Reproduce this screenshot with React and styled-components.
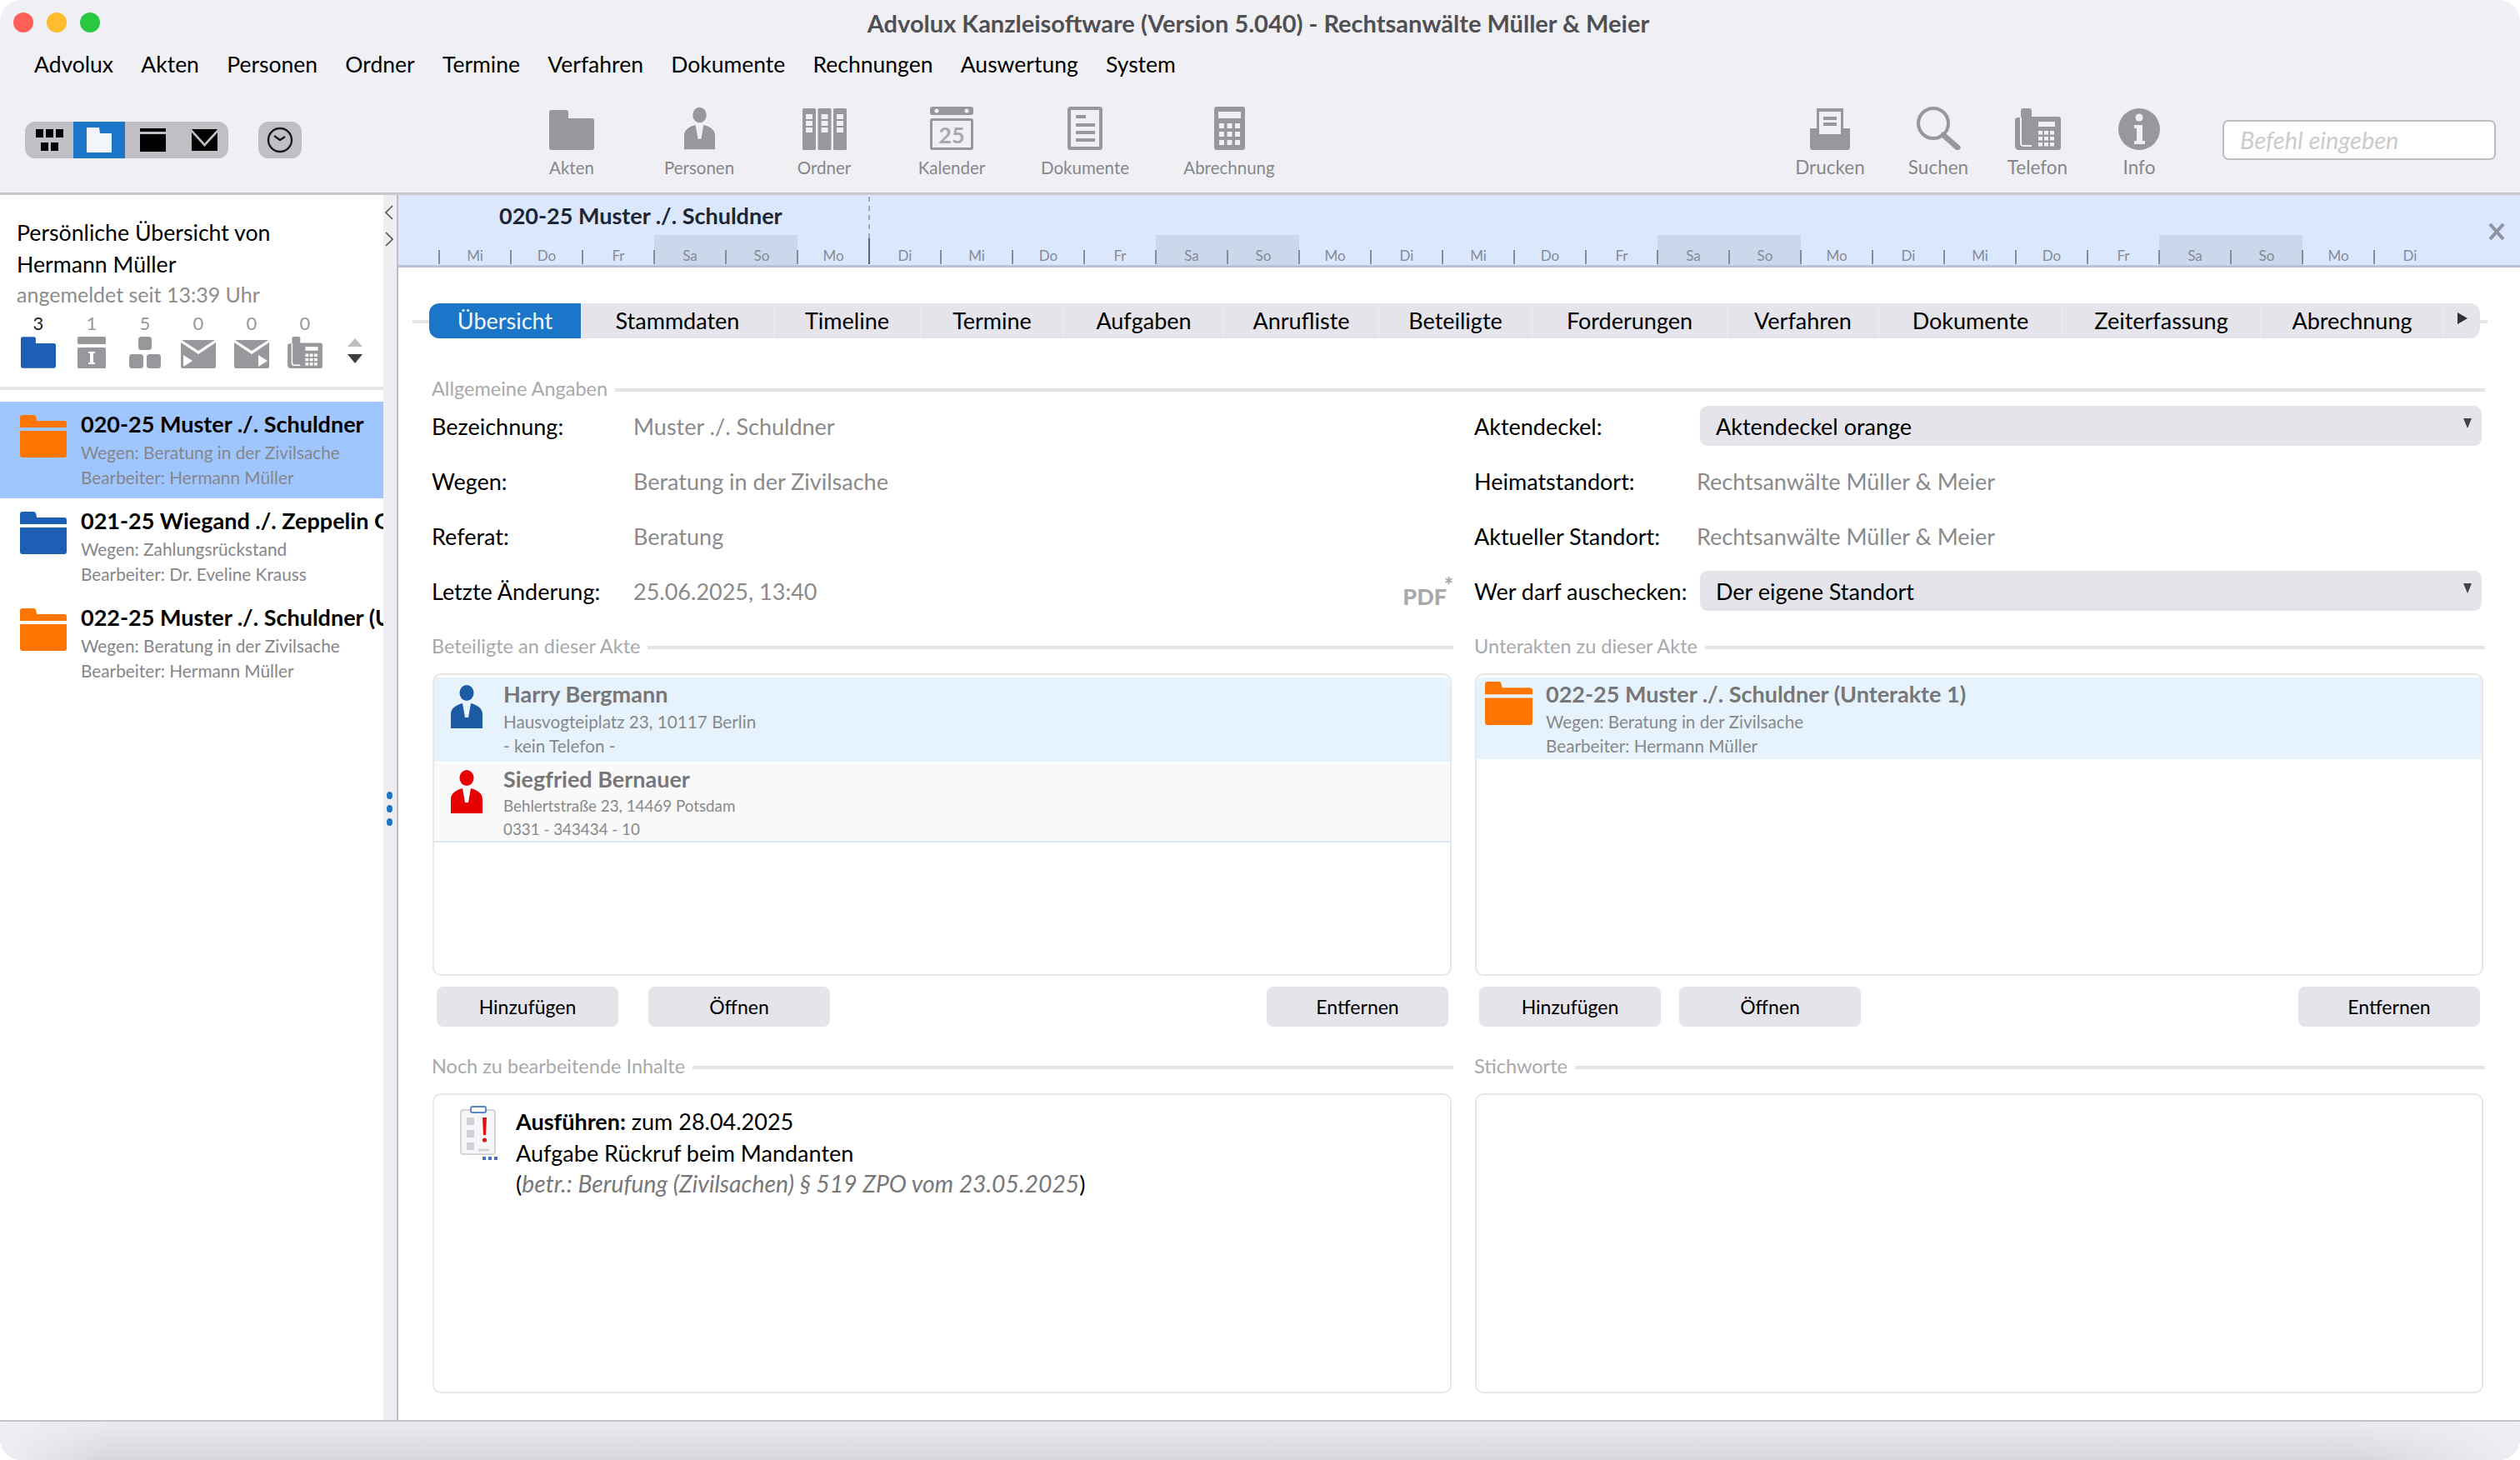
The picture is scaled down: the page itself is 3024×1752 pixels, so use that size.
import React from "react";
import styled, { createGlobalStyle } from "styled-components";

const GlobalStyle = createGlobalStyle`
  html, body { margin: 0; padding: 0; background: #fff; }
  body { font-family: "Lato", "Liberation Sans", sans-serif; color: #000; }
  * { box-sizing: border-box; }
`;

const GREY = "#98989c";

const Window = styled.div`
  width: 3024px;
  height: 1752px;
  display: flex;
  flex-direction: column;
  overflow: hidden;
  border-radius: 26px;
  background: #f0f0f4;
`;

const Header = styled.header`
  height: 234px;
  flex: none;
  border-bottom: 3px solid #c9c9cd;
`;

const TitleBar = styled.div`
  height: 54px;
  display: flex;
  align-items: center;
  padding: 0 124px 0 16px;
`;

const Lights = styled.div`
  display: flex;
  gap: 16px;
`;

const Light = styled.span`
  width: 24px;
  height: 24px;
  border-radius: 50%;
  background: ${({ $c }) => $c};
`;

const Title = styled.div`
  flex: 1;
  text-align: center;
  font-size: 29px;
  font-weight: 700;
  color: #505054;
`;

const MenuBar = styled.nav`
  height: 46px;
  display: flex;
  align-items: center;
  gap: 33.3px;
  padding-left: 41px;
  font-size: 26.5px;
`;

const Toolbar = styled.div`
  display: flex;
  align-items: flex-start;
  padding: 28px 29px 0 30px;
`;

const Segments = styled.div`
  display: flex;
  height: 44px;
  width: 244px;
  margin-top: 18px;
  border-radius: 12px;
  overflow: hidden;
  background: #c0bfc6;
`;

const Segment = styled.div`
  width: ${({ $w }) => $w}px;
  display: flex;
  align-items: center;
  justify-content: center;
  background: ${({ $on }) => ($on ? "#1b76c9" : "transparent")};
`;

const ClockButton = styled.div`
  width: 52px;
  height: 44px;
  margin: 18px 249px 0 36px;
  border-radius: 12px;
  background: #c0bfc6;
  display: flex;
  align-items: center;
  justify-content: center;
`;

const ToolGroup = styled.div`
  display: flex;
  margin-left: ${({ $auto }) => ($auto ? "auto" : "0")};
`;

const ToolItem = styled.div`
  width: ${({ $w }) => $w}px;
  display: flex;
  flex-direction: column;
  align-items: center;
`;

const ToolIcon = styled.div`
  height: 52px;
  display: flex;
  align-items: flex-end;
`;

const ToolLabel = styled.div`
  margin-top: 7px;
  font-size: ${({ $big }) => ($big ? 22.5 : 20.5)}px;
  line-height: 28px;
  color: #87878b;
`;

const CommandInput = styled.input`
  width: 328px;
  height: 48px;
  margin: 16px 0 0 32px;
  padding: 0 19px 2px;
  border: 2px solid #bdbdbd;
  border-radius: 7px;
  background: #fff;
  font-family: inherit;
  font-size: 29px;
  font-style: italic;
  &::placeholder { color: #cbcbcd; opacity: 1; }
`;

const Body = styled.div`
  flex: 1;
  display: flex;
  min-height: 0;
  background: #fff;
`;

const Sidebar = styled.aside`
  width: 460px;
  flex: none;
  overflow: hidden;
`;

const SideHead = styled.div`
  padding: 26px 0 0 20px;
`;

const SideTitle = styled.div`
  font-size: 26.7px;
  line-height: 38px;
`;

const SideSub = styled.div`
  font-size: 25px;
  line-height: 34px;
  color: #8c8c8c;
`;

const Counters = styled.div`
  display: flex;
  margin: 6px 0 0 -6px;
`;

const Counter = styled.div`
  width: 64px;
  display: flex;
  flex-direction: column;
  align-items: center;
`;

const CounterNum = styled.div`
  font-size: 22px;
  line-height: 24px;
  color: ${({ $on }) => ($on ? "#222" : "#999")};
`;

const CounterIcon = styled.div`
  height: 40px;
  margin-top: 2px;
  display: flex;
  align-items: flex-end;
`;

const SortArrows = styled.div`
  margin: 30px 0 0 18px;
`;

const SideDivider = styled.div`
  height: 4px;
  margin: 22px 0 14px;
  background: #e6e6e6;
`;

const FileRow = styled.div`
  height: 116px;
  padding: 12px 0 0 24px;
  display: flex;
  gap: 17px;
  white-space: nowrap;
  overflow: hidden;
  background: ${({ $on }) => ($on ? "#9fc6ff" : "transparent")};
  svg { margin-top: 4px; flex: none; }
`;

const FileName = styled.div`
  font-size: 27px;
  font-weight: 700;
  line-height: 30px;
`;

const FileSub = styled.div`
  font-size: 20.8px;
  line-height: 30px;
  color: #86868a;
  margin-top: ${({ $first }) => ($first ? "4px" : "0")};
`;

const Gutter = styled.div`
  width: 18px;
  flex: none;
  background: #eeeef2;
  border-right: 2px solid #bfbfc2;
  display: flex;
  flex-direction: column;
  align-items: center;
  padding: 12px 2px 0 0;
`;

const Chevrons = styled.div`
  display: flex;
  flex-direction: column;
  gap: 14px;
  margin-bottom: 654px;
`;

const Dots = styled.div`
  display: flex;
  flex-direction: column;
  gap: 7px;
  span {
    width: 7px;
    height: 9px;
    border-radius: 50%;
    background: #1b76c9;
  }
`;

const Main = styled.main`
  flex: 1;
  min-width: 0;
`;

const Timeline = styled.div`
  position: relative;
  height: 87px;
  background: #dbe7fd;
  border-bottom: 3px solid #b7c3d8;
`;

const TimelineTitle = styled.div`
  height: 48px;
  padding-left: 121px;
  display: flex;
  align-items: center;
  font-size: 27px;
  font-weight: 700;
  color: #1c2635;
`;

const DayStrip = styled.div`
  display: flex;
  padding-left: 49px;
`;

const Day = styled.div`
  position: relative;
  width: 86px;
  height: 36px;
  padding-top: 14px;
  text-align: center;
  font-size: 17px;
  line-height: 22px;
  color: #858b97;
  background: ${({ $weekend }) => ($weekend ? "#cbd7ea" : "transparent")};
  &::before {
    content: "";
    position: absolute;
    left: -1px;
    bottom: 1px;
    width: 2px;
    height: ${({ $today }) => ($today ? "31px" : "17px")};
    background: ${({ $today }) => ($today ? "#62666e" : "#868c98")};
  }
  ${({ $today }) =>
    $today &&
    `&::after {
      content: "";
      position: absolute;
      left: -1px;
      top: -46px;
      height: 50px;
      border-left: 2px dashed #a2a8b4;
    }`}
`;

const CloseBtn = styled.div`
  position: absolute;
  right: 18px;
  top: 34px;
  line-height: 0;
`;

const TabRow = styled.div`
  position: relative;
  display: flex;
  margin: 43px 0 0 37px;
  width: 2461px;
  height: 42px;
  &::before {
    content: "";
    position: absolute;
    left: -20px;
    right: -9px;
    top: 20px;
    height: 4px;
    background: #e6e6e6;
  }
`;

const Tab = styled.div`
  position: relative;
  width: ${({ $w }) => $w}px;
  display: flex;
  align-items: center;
  justify-content: center;
  padding-bottom: 2px;
  font-size: 27px;
  border-right: 1px solid #ededf1;
  color: ${({ $on }) => ($on ? "#f4f8fd" : "#000")};
  background: ${({ $on }) => ($on ? "#1b76c9" : "#e4e4ea")};
  &:first-child { border-radius: 12px 0 0 12px; }
  &:last-child { border-radius: 0 12px 12px 0; border-right: 0; }
`;

const TabArrow = styled.span`
  width: 0;
  height: 0;
  border-style: solid;
  border-width: 7px 0 7px 12px;
  border-color: transparent transparent transparent #333;
  margin-top: -4px;
`;

const Content = styled.div`
  display: grid;
  grid-template-columns: 1226px 1213px;
  column-gap: 25px;
  padding: 50px 0 0 40px;
`;

const Heading = styled.div`
  grid-column: ${({ $wide }) => ($wide ? "1 / span 2" : "auto")};
  height: 24px;
  display: flex;
  align-items: center;
  gap: 9px;
  padding-bottom: 4px;
  margin-top: ${({ $mt }) => $mt || 0}px;
  font-size: 23.5px;
  white-space: nowrap;
  color: #a9a9ab;
  &::after {
    content: "";
    flex: 1;
    height: 4px;
    margin-top: 4px;
    background: #e4e4e4;
  }
`;

const FormCol = styled.div`
  display: flex;
  flex-direction: column;
  margin-top: -2px;
`;

const FormRow = styled.div`
  height: 66px;
  display: flex;
  align-items: center;
  font-size: 27px;
  white-space: nowrap;
`;

const FormLabel = styled.div`
  width: ${({ $w }) => $w}px;
  flex: none;
`;

const FormValue = styled.div`
  color: #8a8a8c;
`;

const Select = styled.div`
  flex: 1;
  height: 48px;
  margin: 0 4px;
  padding: 0 12px 0 19px;
  display: flex;
  align-items: center;
  justify-content: space-between;
  border-radius: 9px;
  background: #e4e4ea;
`;

const Caret = styled.span`
  width: 0;
  height: 0;
  margin-top: -6px;
  border-style: solid;
  border-width: 12px 5px 0 5px;
  border-color: #444 transparent transparent transparent;
`;

const PdfMark = styled.div`
  position: relative;
  margin: 14px 8px 0 auto;
  font-size: 27px;
  font-weight: 900;
  line-height: 24px;
  color: #a9a9ab;
  &::after {
    content: "*";
    position: absolute;
    right: -8px;
    top: -15px;
    font-size: 26px;
    line-height: 26px;
  }
`;

const Panel = styled.div`
  height: ${({ $h }) => $h}px;
  margin: ${({ $mt }) => $mt || 0}px 2px 0 1px;
  padding-top: ${({ $pad }) => $pad || 0}px;
  border: 2px solid #e7e7eb;
  border-radius: 10px;
  overflow: hidden;
  background: #fff;
`;

const ListRow = styled.div`
  height: ${({ $h }) => $h}px;
  display: flex;
  white-space: nowrap;
  padding: ${({ $top }) => $top}px 0 0 ${({ $left }) => $left}px;
  gap: ${({ $gap }) => $gap}px;
  background: ${({ $on }) => ($on ? "#e6f3fc" : "#f9f9f9")};
  border-bottom: 2px solid ${({ $on }) => ($on ? "#fff" : "#dce9f5")};
  svg { flex: none; margin-top: ${({ $iconTop }) => $iconTop || 0}px; }
`;

const ListName = styled.div`
  font-size: 27px;
  font-weight: 700;
  line-height: 30px;
  color: #77777a;
`;

const ListSub = styled.div`
  font-size: ${({ $small }) => ($small ? 18.8 : 20.7)}px;
  line-height: ${({ $small }) => ($small ? 28 : 29)}px;
  color: #88888a;
  margin-top: ${({ $first, $small }) => ($first ? ($small ? "3px" : "4px") : "0")};
`;

const ButtonRow = styled.div`
  display: flex;
  gap: ${({ $gap }) => $gap}px;
  margin-top: 13px;
  padding: 0 6px;
`;

const Button = styled.div`
  width: 218px;
  height: 48px;
  display: flex;
  align-items: center;
  justify-content: center;
  margin-left: ${({ $push }) => ($push ? "auto" : "0")};
  border-radius: 8px;
  background: #e4e4ea;
  font-size: 23px;
`;

const Task = styled.div`
  display: flex;
  gap: 19px;
  padding: 13px 0 0 31px;
`;

const TaskLine = styled.div`
  font-size: 27px;
  line-height: 37.6px;
  white-space: nowrap;
`;

const Muted = styled.span`
  font-size: 28.3px;
  font-style: italic;
  color: #77777a;
`;

const Footer = styled.footer`
  height: 48px;
  flex: none;
  border-top: 2px solid #c2c2c8;
  background:
    linear-gradient(90deg, #eeeef3 0, rgba(238, 238, 243, 0) 130px, rgba(238, 238, 243, 0) calc(100% - 200px), #eeeef3 100%),
    linear-gradient(180deg, #eaeaf0, #d7d7db);
`;

// icons

const Folder = ({ c = GREY, w = 56, h = 52 }) => (
  <svg width={w} height={h} viewBox="0 0 56 52">
    <path fill={c} d="M3 0h13c2 0 3 1 3.5 3.5L20 7h33c2 0 3 1 3 3v5H0V3c0-2 1-3 3-3z" />
    <path fill={c} d="M0 19h56v29c0 2-1 3-3 3H3c-2 0-3-1-3-3z" />
  </svg>
);

const SolidFolder = ({ c, w, h }) => (
  <svg width={w} height={h} viewBox="0 0 54 48">
    <path fill={c} d="M3 0h17c2 0 3 1 3 3v7h28c2 0 3 1 3 3v32c0 2-1 3-3 3H3c-2 0-3-1-3-3V3c0-2 1-3 3-3z" />
  </svg>
);

const Person = ({ c = GREY, w = 38, h = 52 }) => (
  <svg width={w} height={h} viewBox="0 0 38 52">
    <ellipse cx="19" cy="9.5" rx="8.5" ry="9.5" fill={c} />
    <path fill={c} d="M0 52V35c0-7 6-11 14-13l3 17h4l3-17c8 2 14 6 14 13v17z" />
  </svg>
);

const Binders = () => (
  <svg width="53" height="50" viewBox="0 0 53 50">
    {[0, 18.5, 37].map((x) => (
      <g key={x}>
        <rect x={x} width="16" height="50" rx="1.5" fill={GREY} />
        {[7, 15, 23].map((y) => (
          <rect key={y} x={x + 4} y={y} width="8" height="6" fill="#f0f0f4" />
        ))}
      </g>
    ))}
  </svg>
);

const Calendar = () => (
  <svg width="52" height="52" viewBox="0 0 52 52">
    <rect width="52" height="10" rx="3" fill={GREY} />
    <circle cx="8" cy="5" r="2.5" fill="#f0f0f4" />
    <circle cx="44" cy="5" r="2.5" fill="#f0f0f4" />
    <rect x="1.5" y="15.5" width="49" height="35" rx="1.5" fill="none" stroke={GREY} strokeWidth="3" />
    <text x="26" y="44" textAnchor="middle" fontSize="27" fontWeight="700" fill="#a9a9ad" fontFamily="Lato, sans-serif">25</text>
  </svg>
);

const DocIcon = () => (
  <svg width="42" height="52" viewBox="0 0 42 52">
    <rect x="2" y="2" width="38" height="48" rx="1.5" fill="none" stroke={GREY} strokeWidth="4" />
    <rect x="10" y="10" width="12" height="4" fill={GREY} />
    <rect x="10" y="20" width="23" height="4" fill={GREY} />
    <rect x="10" y="29" width="23" height="4" fill={GREY} />
    <rect x="10" y="38" width="23" height="4" fill={GREY} />
  </svg>
);

const Calculator = () => (
  <svg width="37" height="52" viewBox="0 0 37 52">
    <rect width="37" height="52" rx="3" fill={GREY} />
    <rect x="5" y="6" width="27" height="8" fill="#f0f0f4" />
    {[20, 30, 40].map((y) =>
      [6, 15.5, 25].map((x) => <rect key={x + "-" + y} x={x} y={y} width="6" height="6" fill="#f0f0f4" />)
    )}
  </svg>
);

const Printer = () => (
  <svg width="48" height="50" viewBox="0 0 48 50">
    <path fill={GREY} d="M8 0h32v24h8v23c0 2-1 3-3 3H3c-2 0-3-1-3-3V24h8z" />
    <rect x="11" y="4" width="26" height="27" fill="#f0f0f4" />
    <rect x="16" y="10" width="16" height="4" fill={GREY} />
    <rect x="16" y="17" width="16" height="4" fill={GREY} />
  </svg>
);

const Magnifier = () => (
  <svg width="55" height="52" viewBox="0 0 55 52">
    <circle cx="21" cy="20" r="18" fill="none" stroke={GREY} strokeWidth="4" />
    <path d="M33 34l17 15" stroke={GREY} strokeWidth="7" strokeLinecap="round" />
  </svg>
);

const DeskPhone = ({ c = GREY, bg = "#f0f0f4", w = 55, h = 50 }) => (
  <svg width={w} height={h} viewBox="0 0 55 50">
    <path fill={c} d="M10 0h7c2 0 3 1 3 3v7h32c2 0 3 1 3 3v34c0 2-1 3-3 3H5c-3 0-5-2-5-5V14c0-2 2-3 4-3h3V3c0-2 1-3 3-3z" />
    <path fill="none" stroke={bg} strokeWidth="2" d="M7 11v31c0 2 2 3 4 3h9" />
    <rect x="28" y="16" width="20" height="6" fill={bg} />
    {[27, 34, 41].map((y) =>
      [28, 35, 42].map((x) => <rect key={x + "-" + y} x={x} y={y} width="5" height="4.5" fill={bg} />)
    )}
  </svg>
);

const InfoIcon = () => (
  <svg width="50" height="50" viewBox="0 0 50 50">
    <circle cx="25" cy="25" r="25" fill={GREY} />
    <circle cx="25" cy="11" r="4.5" fill="#f0f0f4" />
    <path fill="#f0f0f4" d="M19 20h10v19h3v4H19v-4h3V24h-3z" />
  </svg>
);

const Grid = () => (
  <svg width="33" height="26" viewBox="0 0 33 26">
    {[0, 12, 24].map((x) => <rect key={x} x={x} width="9" height="10" fill="#000" />)}
    {[6, 18].map((x) => <rect key={x} x={x} y="16" width="9" height="10" fill="#000" />)}
  </svg>
);

const Archive = () => (
  <svg width="31" height="28" viewBox="0 0 31 28">
    <rect width="31" height="4" fill="#000" />
    <rect y="7" width="31" height="21" fill="#000" />
  </svg>
);

const MailBlack = () => (
  <svg width="31" height="26" viewBox="0 0 31 26">
    <path fill="#000" d="M0 0h31L15.5 17z" />
    <path fill="#000" d="M0 4v22h31V4L15.5 21z" />
  </svg>
);

const Clock = () => (
  <svg width="32" height="32" viewBox="0 0 32 32">
    <circle cx="16" cy="16" r="14" fill="none" stroke="#1d1d1f" strokeWidth="2.4" />
    <path d="M9 11l7 5 6-4" fill="none" stroke="#1d1d1f" strokeWidth="2.4" />
  </svg>
);

const ArchiveSmall = () => (
  <svg width="34" height="38" viewBox="0 0 34 38">
    <rect width="34" height="9" rx="1.5" fill={GREY} />
    <rect y="13" width="34" height="25" rx="1.5" fill={GREY} />
    <path fill="#fff" d="M13 18h8v2h-2v11h2v2h-8v-2h2V20h-2z" />
  </svg>
);

const Cubes = () => (
  <svg width="38" height="38" viewBox="0 0 38 38">
    <rect x="11" width="16" height="16" rx="3.5" fill={GREY} />
    <rect y="21" width="17" height="17" rx="3.5" fill={GREY} />
    <rect x="21" y="21" width="17" height="17" rx="3.5" fill={GREY} />
  </svg>
);

const MailPlay = ({ right }) => (
  <svg width="42" height="34" viewBox="0 0 42 34">
    <path fill={GREY} d="M1 0h40L21 13z" />
    <path fill={GREY} d="M0 3v29c0 1 1 2 2 2h38c1 0 2-1 2-2V3L21 17z" />
    <path fill="#fff" d={right ? "M29 18l11 7-11 7z" : "M3 18l11 7-11 7z"} />
  </svg>
);

const Sort = () => (
  <svg width="20" height="30" viewBox="0 0 20 30">
    <path fill="#bebec3" d="M10 0l9 10H1z" />
    <path fill="#3d3d42" d="M1 19h18l-9 11z" />
  </svg>
);

const ChevronIcon = ({ right }) => (
  <svg width="10" height="18" viewBox="0 0 10 18">
    <path d={right ? "M1 1l8 8-8 8" : "M9 1L1 9l8 8"} fill="none" stroke="#55555a" strokeWidth="1.6" />
  </svg>
);

const CloseIcon = () => (
  <svg width="20" height="20" viewBox="0 0 20 20">
    <path d="M2 1l16 18M18 1L2 19" stroke="#8e949f" strokeWidth="4" />
  </svg>
);

const TaskIcon = () => (
  <svg width="48" height="65" viewBox="0 0 48 65">
    <rect x="1" y="5" width="41" height="53" rx="3" fill="#f6f6f8" stroke="#d4d4d8" strokeWidth="2" />
    <rect x="13" y="1" width="18" height="7" rx="2" fill="#fff" stroke="#5b86c6" strokeWidth="2" />
    {[14, 29, 44].map((y) => <rect key={y} x="8" y={y} width="9" height="9" fill="#d2d2d6" />)}
    <path d="M22 53h13" stroke="#d2d2d6" strokeWidth="3" />
    <path fill="#e01010" d="M27 14h5l-1 21h-3z" />
    <circle cx="29.5" cy="41" r="2.6" fill="#e01010" />
    {[27, 34, 41].map((x) => <rect key={x} x={x} y="61" width="4" height="4" fill="#3f6fc0" />)}
  </svg>
);

const MENU = ["Advolux", "Akten", "Personen", "Ordner", "Termine", "Verfahren", "Dokumente", "Rechnungen", "Auswertung", "System"];

const TOOLS_LEFT = [
  ["Akten", 150, <SolidFolder key="a" c={GREY} w={54} h={48} />],
  ["Personen", 156, <Person key="p" w={37} />],
  ["Ordner", 144, <Binders key="o" />],
  ["Kalender", 162, <Calendar key="k" />],
  ["Dokumente", 158, <DocIcon key="d" />],
  ["Abrechnung", 188, <Calculator key="c" />],
];

const TOOLS_RIGHT = [
  ["Drucken", 130, <Printer key="dr" />],
  ["Suchen", 130, <Magnifier key="s" />],
  ["Telefon", 108, <DeskPhone key="t" />],
  ["Info", 136, <InfoIcon key="i" />],
];

const COUNTERS = [
  [3, <SolidFolder key="1" c="#1c5fb4" w={42} h={38} />],
  [1, <ArchiveSmall key="2" />],
  [5, <Cubes key="3" />],
  [0, <MailPlay key="4" />],
  [0, <MailPlay key="5" right />],
  [0, <DeskPhone key="6" w={44} h={38} bg="#fff" />],
];

const FILES = [
  { name: "020-25 Muster ./. Schuldner", re: "Beratung in der Zivilsache", by: "Hermann Müller", c: "#ff7500" },
  { name: "021-25 Wiegand ./. Zeppelin GmbH", re: "Zahlungsrückstand", by: "Dr. Eveline Krauss", c: "#1c5fb4" },
  { name: "022-25 Muster ./. Schuldner (Unterakte 1)", re: "Beratung in der Zivilsache", by: "Hermann Müller", c: "#ff7500" },
];

const WEEK = ["Mi", "Do", "Fr", "Sa", "So", "Mo", "Di"];
const DAYS = Array.from({ length: 28 }, (_, i) => WEEK[i % 7]);

const TABS = [
  ["Übersicht", 183],
  ["Stammdaten", 231],
  ["Timeline", 176],
  ["Termine", 172],
  ["Aufgaben", 192],
  ["Anrufliste", 186],
  ["Beteiligte", 184],
  ["Forderungen", 234],
  ["Verfahren", 182],
  ["Dokumente", 220],
  ["Zeiterfassung", 238],
  ["Abrechnung", 220],
];

const App = () => (
  <Window>
    <GlobalStyle />
    <Header>
      <TitleBar>
        <Lights>
          <Light $c="#ff5f57" />
          <Light $c="#febc2e" />
          <Light $c="#28c840" />
        </Lights>
        <Title>Advolux Kanzleisoftware (Version 5.040) - Rechtsanwälte Müller &amp; Meier</Title>
      </TitleBar>
      <MenuBar>
        {MENU.map((m) => <span key={m}>{m}</span>)}
      </MenuBar>
      <Toolbar>
        <Segments>
          <Segment $w={58}><Grid /></Segment>
          <Segment $w={62} $on>
            <svg width="30" height="30" viewBox="0 0 30 30">
              <path fill="#f2f5f9" d="M0 0h15l1 7h14v23H0z" />
            </svg>
          </Segment>
          <Segment $w={66}><Archive /></Segment>
          <Segment $w={58}><MailBlack /></Segment>
        </Segments>
        <ClockButton><Clock /></ClockButton>
        <ToolGroup>
          {TOOLS_LEFT.map(([label, w, icon]) => (
            <ToolItem key={label} $w={w}>
              <ToolIcon>{icon}</ToolIcon>
              <ToolLabel>{label}</ToolLabel>
            </ToolItem>
          ))}
        </ToolGroup>
        <ToolGroup $auto>
          {TOOLS_RIGHT.map(([label, w, icon]) => (
            <ToolItem key={label} $w={w}>
              <ToolIcon>{icon}</ToolIcon>
              <ToolLabel $big>{label}</ToolLabel>
            </ToolItem>
          ))}
        </ToolGroup>
        <CommandInput placeholder="Befehl eingeben" />
      </Toolbar>
    </Header>

    <Body>
      <Sidebar>
        <SideHead>
          <SideTitle>Persönliche Übersicht von</SideTitle>
          <SideTitle>Hermann Müller</SideTitle>
          <SideSub>angemeldet seit 13:39 Uhr</SideSub>
          <Counters>
            {COUNTERS.map(([n, icon], i) => (
              <Counter key={i}>
                <CounterNum $on={i === 0}>{n}</CounterNum>
                <CounterIcon>{icon}</CounterIcon>
              </Counter>
            ))}
            <SortArrows><Sort /></SortArrows>
          </Counters>
        </SideHead>
        <SideDivider />
        {FILES.map((f, i) => (
          <FileRow key={f.name} $on={i === 0}>
            <Folder c={f.c} />
            <div>
              <FileName>{f.name}</FileName>
              <FileSub $first>Wegen: {f.re}</FileSub>
              <FileSub>Bearbeiter: {f.by}</FileSub>
            </div>
          </FileRow>
        ))}
      </Sidebar>
      <Gutter>
        <Chevrons>
          <ChevronIcon />
          <ChevronIcon right />
        </Chevrons>
        <Dots><span /><span /><span /></Dots>
      </Gutter>

      <Main>
        <Timeline>
          <TimelineTitle>020-25 Muster ./. Schuldner</TimelineTitle>
          <DayStrip>
            {DAYS.map((d, i) => (
              <Day key={i} $weekend={d === "Sa" || d === "So"} $today={i === 6}>{d}</Day>
            ))}
          </DayStrip>
          <CloseBtn><CloseIcon /></CloseBtn>
        </Timeline>

        <TabRow>
          {TABS.map(([t, w], i) => <Tab key={t} $w={w} $on={i === 0}>{t}</Tab>)}
          <Tab $w={43}><TabArrow /></Tab>
        </TabRow>

        <Content>
          <Heading $wide>Allgemeine Angaben</Heading>
          <FormCol>
            <FormRow><FormLabel $w={242}>Bezeichnung:</FormLabel><FormValue>Muster ./. Schuldner</FormValue></FormRow>
            <FormRow><FormLabel $w={242}>Wegen:</FormLabel><FormValue>Beratung in der Zivilsache</FormValue></FormRow>
            <FormRow><FormLabel $w={242}>Referat:</FormLabel><FormValue>Beratung</FormValue></FormRow>
            <FormRow>
              <FormLabel $w={242}>Letzte Änderung:</FormLabel>
              <FormValue>25.06.2025, 13:40</FormValue>
              <PdfMark>PDF</PdfMark>
            </FormRow>
          </FormCol>
          <FormCol>
            <FormRow><FormLabel $w={267}>Aktendeckel:</FormLabel><Select>Aktendeckel orange<Caret /></Select></FormRow>
            <FormRow><FormLabel $w={267}>Heimatstandort:</FormLabel><FormValue>Rechtsanwälte Müller &amp; Meier</FormValue></FormRow>
            <FormRow><FormLabel $w={267}>Aktueller Standort:</FormLabel><FormValue>Rechtsanwälte Müller &amp; Meier</FormValue></FormRow>
            <FormRow><FormLabel $w={267}>Wer darf auschecken:</FormLabel><Select>Der eigene Standort<Caret /></Select></FormRow>
          </FormCol>

          <Heading $mt={23}>Beteiligte an dieser Akte</Heading>
          <Heading $mt={23}>Unterakten zu dieser Akte</Heading>

          <div>
            <Panel $h={363} $mt={19} $pad={3}>
              <ListRow $on $h={103} $top={5} $left={20} $gap={25} $iconTop={4}>
                <Person c="#1c5ba3" />
                <div>
                  <ListName>Harry Bergmann</ListName>
                  <ListSub $first>Hausvogteiplatz 23, 10117 Berlin</ListSub>
                  <ListSub>- kein Telefon -</ListSub>
                </div>
              </ListRow>
              <ListRow $h={95} $top={4} $left={20} $gap={25} $iconTop={4}>
                <Person c="#e60000" />
                <div>
                  <ListName>Siegfried Bernauer</ListName>
                  <ListSub $first $small>Behlertstraße 23, 14469 Potsdam</ListSub>
                  <ListSub $small>0331 - 343434 - 10</ListSub>
                </div>
              </ListRow>
            </Panel>
            <ButtonRow $gap={36}>
              <Button>Hinzufügen</Button>
              <Button>Öffnen</Button>
              <Button $push>Entfernen</Button>
            </ButtonRow>
          </div>
          <div>
            <Panel $h={363} $mt={19} $pad={3}>
              <ListRow $on $h={100} $top={5} $left={10} $gap={16}>
                <Folder c="#ff7500" w={57} h={53} />
                <div>
                  <ListName>022-25 Muster ./. Schuldner (Unterakte 1)</ListName>
                  <ListSub $first>Wegen: Beratung in der Zivilsache</ListSub>
                  <ListSub>Bearbeiter: Hermann Müller</ListSub>
                </div>
              </ListRow>
            </Panel>
            <ButtonRow $gap={22}>
              <Button>Hinzufügen</Button>
              <Button>Öffnen</Button>
              <Button $push>Entfernen</Button>
            </ButtonRow>
          </div>

          <Heading $mt={37}>Noch zu bearbeitende Inhalte</Heading>
          <Heading $mt={37}>Stichworte</Heading>

          <Panel $h={360} $mt={19}>
            <Task>
              <TaskIcon />
              <div>
                <TaskLine><b>Ausführen:</b> zum 28.04.2025</TaskLine>
                <TaskLine>Aufgabe Rückruf beim Mandanten</TaskLine>
                <TaskLine>(<Muted>betr.: Berufung (Zivilsachen) § 519 ZPO vom 23.05.2025</Muted>)</TaskLine>
              </div>
            </Task>
          </Panel>
          <Panel $h={360} $mt={19} />
        </Content>
      </Main>
    </Body>
    <Footer />
  </Window>
);

export default App;
